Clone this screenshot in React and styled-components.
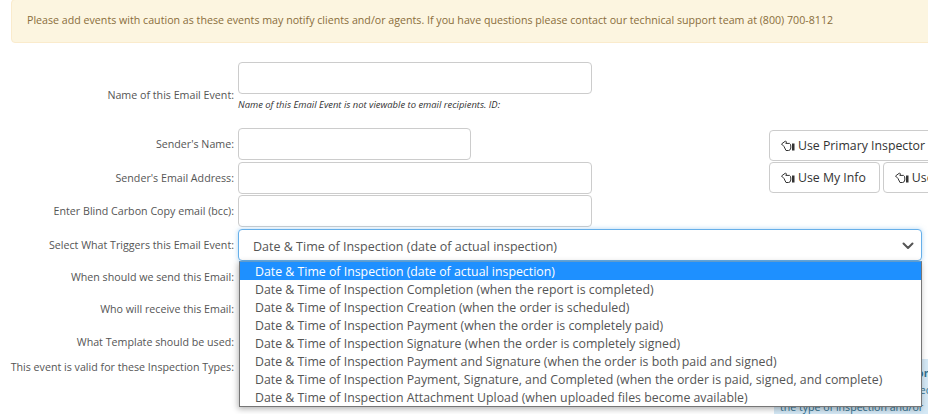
import React from 'react';
import styled, { createGlobalStyle } from 'styled-components';

const GlobalStyle = createGlobalStyle`
  html, body { margin: 0; padding: 0; background: #fff; overflow: hidden; }
  body { width: 928px; height: 414px; font-family: "Open Sans", "Noto Sans", sans-serif; }
  * { box-sizing: border-box; }
`;

const Page = styled.div`
  position: relative;
  width: 928px;
  height: 414px;
  overflow: hidden;
`;
const Alert = styled.div`
  margin: -1px 0 0 11px;
  width: 930px;
  height: 44px;
  padding: 12px 15px 0;
  background: #fcf5e0;
  border: 1px solid #faebcc;
  border-radius: 4px;
  color: #8a6d3b;
  font-size: 10.66px;
  line-height: 16px;
  white-space: nowrap;
`;
const Form = styled.div`
  display: flex;
  flex-direction: column;
  margin-top: 19px;
`;
const Row = styled.div`
  display: flex;
  align-items: center;
  height: ${(p) => p.$h}px;
  margin-bottom: ${(p) => p.$mb || 0}px;
`;
const Label = styled.div`
  width: 234px;
  flex: none;
  text-align: right;
  color: #555;
  font-size: 10.68px;
  line-height: 14px;
  white-space: nowrap;
`;
const Field = styled.div`
  align-self: flex-start;
  margin-left: 4px;
  flex: none;
`;
const Input = styled.div`
  width: ${(p) => p.$w}px;
  height: 32px;
  background: #fff;
  border: 1px solid #ccc;
  border-radius: 4px;
`;
const Hint = styled.div`
  margin-top: 5px;
  color: #333;
  font-size: 9.43px;
  font-style: italic;
  line-height: 12px;
  white-space: nowrap;
`;
const Select = styled.div`
  display: flex;
  align-items: center;
  justify-content: space-between;
  width: 684px;
  height: 32px;
  padding: 2px 5px 0 14px;
  background: #fff;
  border: 1px solid #66afe9;
  border-radius: 4px;
  box-shadow: 0 0 5px rgba(102, 175, 233, 0.5);
  color: #555;
  font-size: 12.5px;
`;
const Buttons = styled.div`
  display: flex;
  gap: 3px;
  align-self: flex-start;
  margin: ${(p) => p.$mt || 0}px 0 0 ${(p) => p.$ml}px;
  flex: none;
`;
const Button = styled.div`
  display: flex;
  align-items: center;
  gap: 3px;
  height: 31px;
  padding: 0 13px 0 11px;
  background: #fff;
  border: 1px solid #ccc;
  border-radius: 4px;
  color: #333;
  font-size: 12.3px;
  white-space: nowrap;
  flex: none;
`;
const Menu = styled.div`
  position: absolute;
  left: 239px;
  top: 261px;
  width: 683px;
  height: 146px;
  background: #fff;
  border: 1px solid #767676;
  border-top-color: #5f9bcc;
  box-shadow: -1px 2px 6px rgba(0, 0, 0, 0.3);
  z-index: 2;
`;
const Option = styled.div`
  height: 18px;
  padding-left: 15px;
  background: ${(p) => (p.$active ? '#1e90ff' : 'transparent')};
  color: ${(p) => (p.$active ? '#fff' : '#555')};
  font-size: 12.33px;
  line-height: 20px;
  white-space: nowrap;
`;
const Note = styled.div`
  position: absolute;
  left: 774px;
  top: 359px;
  width: 160px;
  height: 55px;
  padding: 6px 0 0 6px;
  background: #d4e8f5;
  color: #31708f;
  font-size: 10.6px;
  line-height: 17px;
  white-space: nowrap;
`;
const NoteTitle = styled.div`
  font-weight: 700;
`;

const HandIcon = () => (
  <svg width="14" height="12" viewBox="0 0 14 12" fill="none" stroke="#333" strokeWidth="1">
    <path d="M0.5 4 L4.5 1 L5.5 2 L4.8 3.4 L8.5 3.4 Q9.8 4 9.8 6 L9.8 8 Q9.5 10.5 7.5 10.5 L5 10.5 L3 6.5 Z" />
    <rect x="11" y="3.5" width="2.5" height="7" fill="#333" stroke="none" />
  </svg>
);
const Chevron = () => (
  <svg width="16" height="10" viewBox="0 0 16 10" fill="none" stroke="#555" strokeWidth="2" strokeLinecap="round" strokeLinejoin="round">
    <path d="M3.5 2.5 L8 7 L12.5 2.5" />
  </svg>
);

const OPTIONS = [
  'Date & Time of Inspection (date of actual inspection)',
  'Date & Time of Inspection Completion (when the report is completed)',
  'Date & Time of Inspection Creation (when the order is scheduled)',
  'Date & Time of Inspection Payment (when the order is completely paid)',
  'Date & Time of Inspection Signature (when the order is completely signed)',
  'Date & Time of Inspection Payment and Signature (when the order is both paid and signed)',
  'Date & Time of Inspection Payment, Signature, and Completed (when the order is paid, signed, and complete)',
  'Date & Time of Inspection Attachment Upload (when uploaded files become available)',
];

const App = () => (
  <Page>
    <GlobalStyle />
    <Alert>
      Please add events with caution as these events may notify clients and/or agents. If you have questions please contact our technical support team at (800) 700-8112
    </Alert>
    <Form>
      <Row $h={66}>
        <Label>Name of this Email Event:</Label>
        <Field>
          <Input $w={354} />
          <Hint>Name of this Email Event is not viewable to email recipients. ID:</Hint>
        </Field>
      </Row>
      <Row $h={32} $mb={2}>
        <Label>Sender's Name:</Label>
        <Field><Input $w={233} /></Field>
        <Buttons $ml={298} $mt={2}>
          <Button><HandIcon />Use Primary Inspector</Button>
        </Buttons>
      </Row>
      <Row $h={32} $mb={1}>
        <Label>Sender's Email Address:</Label>
        <Field><Input $w={354} /></Field>
        <Buttons $ml={177}>
          <Button><HandIcon />Use My Info</Button>
          <Button><HandIcon />Use Company Info</Button>
        </Buttons>
      </Row>
      <Row $h={32} $mb={2}>
        <Label>Enter Blind Carbon Copy email (bcc):</Label>
        <Field><Input $w={354} /></Field>
      </Row>
      <Row $h={32}>
        <Label>Select What Triggers this Email Event:</Label>
        <Field>
          <Select>
            Date & Time of Inspection (date of actual inspection)
            <Chevron />
          </Select>
        </Field>
      </Row>
      <Row $h={32}><Label>When should we send this Email:</Label></Row>
      <Row $h={32}><Label>Who will receive this Email:</Label></Row>
      <Row $h={34}><Label>What Template should be used:</Label></Row>
      <Row $h={16}><Label>This event is valid for these Inspection Types:</Label></Row>
    </Form>
    <Menu>
      {OPTIONS.map((o, i) => (
        <Option key={o} $active={i === 0}>{o}</Option>
      ))}
    </Menu>
    <Note>
      <NoteTitle>Valid for all these Inspection Types</NoteTitle>
      <div>This event will only send based</div>
      <div>the type of inspection and/or</div>
    </Note>
  </Page>
);

export default App;
